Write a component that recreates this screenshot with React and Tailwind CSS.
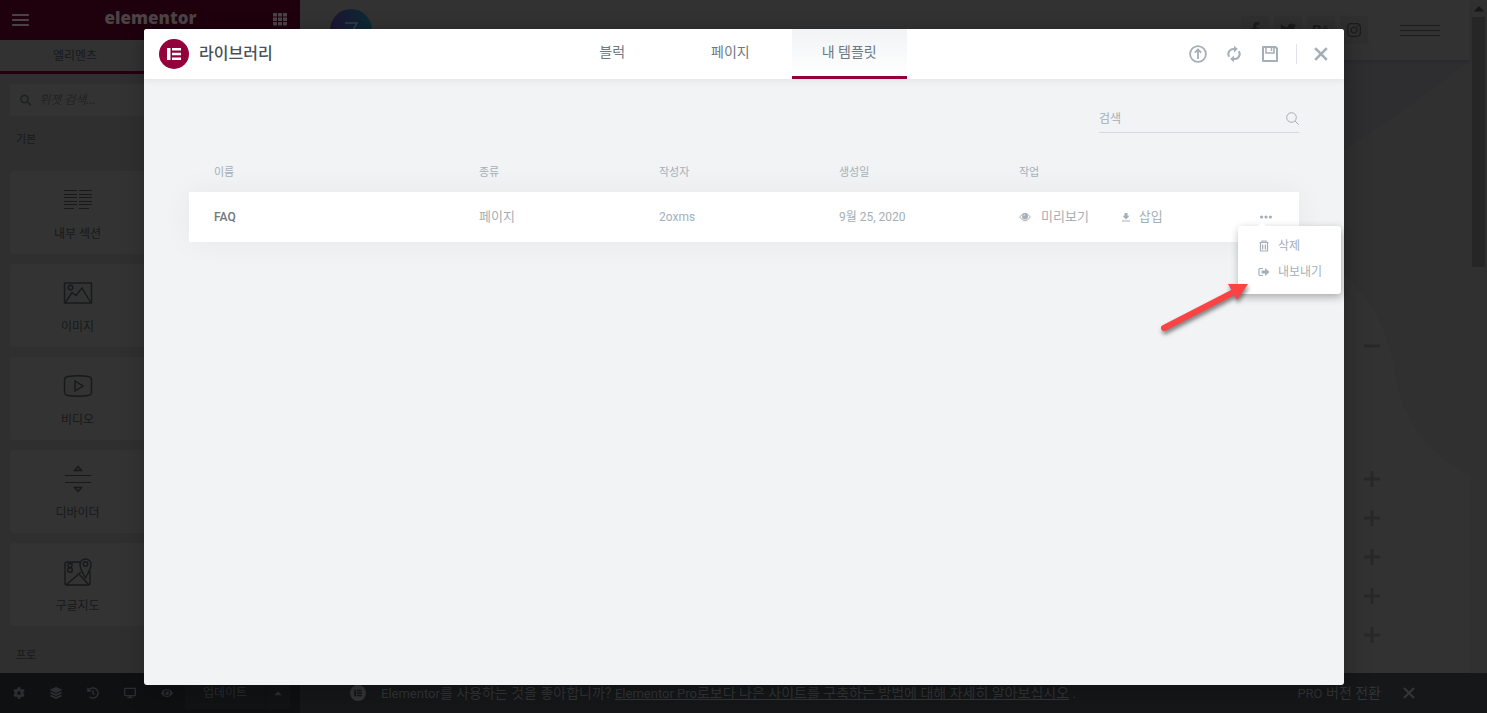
import React from 'react';
import { FaBehance, FaCaretUp, FaCog, FaDesktop, FaEye, FaFacebookF, FaHistory, FaInstagram, FaLayerGroup, FaSearch, FaTwitter } from 'react-icons/fa';

const line = { fill: 'none', stroke: 'currentColor', strokeWidth: 1.4 };

function ColumnsIcon() {
  return (
    <svg width="30" height="30" viewBox="0 0 30 30" {...line} strokeWidth="1">
      <path d="M1 5.500h13M1 9.500h13M1 12.500h13M1 16.500h13M1 19.500h13M1 23.500h10M16 5.500h13M16 9.500h13M16 12.500h13M16 16.500h13M16 19.500h13M16 23.500h10" />
    </svg>
  );
}

function ImageIcon() {
  return (
    <svg width="30" height="30" viewBox="0 0 30 30" {...line}>
      <rect x="1.500" y="5" width="27" height="20" />
      <circle cx="7.500" cy="9.500" r="2.300" />
      <path d="M2 25l7-10.500 4 3 6-7.500 9 15" />
    </svg>
  );
}

function VideoIcon() {
  return (
    <svg width="30" height="30" viewBox="0 0 30 30" {...line}>
      <path d="M5 5.500Q15 4 25 5.500Q28.500 6 28.500 9v12q0 3-3.500 3.500Q15 26 5 24.500Q1.500 24 1.500 21V9q0-3 3.500-3.500z" />
      <path d="M12 10v10l8-5z" />
    </svg>
  );
}

function DividerIcon() {
  return (
    <svg width="30" height="30" viewBox="0 0 30 30" {...line}>
      <path d="M2 11.500h26M2 18.500h26" strokeWidth="1" />
      <path d="M15 2.500l3.500 4h-7zM15 27.500l3.500-4h-7z" />
    </svg>
  );
}

function MapIcon() {
  return (
    <svg width="30" height="30" viewBox="0 0 30 30" {...line}>
      <path d="M17 5H4q-2 0-2 2v19q0 2 2 2h21q2 0 2-2V14" />
      <path d="M22.500 21C19 15 17 11 17 7.500a5.500 5.500 0 0 1 11 0C28 11 26 15 22.500 21z" />
      <circle cx="22.500" cy="7" r="2.300" />
      <path d="M3 28l15-13M16 17l10 11" />
      <circle cx="7" cy="8.500" r="2" />
      <circle cx="7" cy="13" r="2.300" />
      <path d="M8.500 7.500L10 6.500" strokeWidth="1" />
    </svg>
  );
}

function ElementorMark({ className }) {
  return (
    <svg className={className} viewBox="0 0 30 30">
      <circle cx="15" cy="15" r="15" className="fill-current" />
      <path className="fill-[var(--mark)]" d="M8 9h3.500v12H8zM13 9h9v2.500h-9zM13 13.700h9v2.600h-9zM13 18.500h9V21h-9z" />
    </svg>
  );
}

function UploadIcon() {
  return (
    <svg width="18" height="18" viewBox="0 0 18 18" fill="none" stroke="currentColor" strokeWidth="1.800">
      <circle cx="9" cy="9" r="7.900" />
      <path d="M9 14V5.500M5.800 7.600L9 4.600l3.200 3" />
    </svg>
  );
}

function SyncIcon() {
  return (
    <svg width="18" height="18" viewBox="0 0 18 18" fill="none" stroke="currentColor" strokeWidth="2">
      <path d="M9.500 4.200A4.900 4.900 0 0 0 4.200 11.700M8.500 13.800A4.900 4.900 0 0 0 13.800 6.300" />
      <path d="M9 .8v6.600l3.800-3.300zM9 10.600v6.600l-3.800-3.300z" fill="currentColor" stroke="none" />
    </svg>
  );
}

function SaveIcon() {
  return (
    <svg width="18" height="18" viewBox="0 0 18 18" fill="none" stroke="currentColor" strokeWidth="2">
      <path d="M2 2h12.500L16 3.500V16H2z" strokeLinejoin="round" />
      <path d="M5 2v6h8V2M10.500 2.500v3.500" strokeWidth="1.500" />
    </svg>
  );
}

function CloseIcon() {
  return (
    <svg width="14" height="14" viewBox="0 0 14 14" fill="none" stroke="currentColor" strokeWidth="2.600">
      <path d="M1.200 1.200l11.600 11.600M12.800 1.200L1.200 12.800" />
    </svg>
  );
}

function PreviewIcon() {
  return (
    <svg width="12" height="12" viewBox="0 0 12 12">
      <path d="M.6 6Q6-1.500 11.400 6Q6 13.500.6 6z" fill="none" stroke="currentColor" />
      <circle cx="6" cy="5.500" r="3" fill="currentColor" />
      <path d="M4.500 5.200Q4.700 4 6 3.800" fill="none" stroke="white" strokeWidth=".7" />
    </svg>
  );
}

function InsertIcon() {
  return (
    <svg width="10" height="10" viewBox="0 0 10 10" fill="currentColor">
      <path d="M3.500 1h3v2.700h2L5 7.400 1.500 3.700h2zM1 8.500h8v1H1z" />
    </svg>
  );
}

function TrashIcon() {
  return (
    <svg width="12" height="12" viewBox="0 0 12 12" fill="none" stroke="currentColor" strokeWidth="1.200">
      <path d="M1.500 2.500h9M4 2.500V1h4v1.500M2.500 2.500v8.500h7V2.500M4.700 4.500v5M7.300 4.500v5" />
    </svg>
  );
}

function ExportIcon() {
  return (
    <svg width="12" height="12" viewBox="0 0 12 12">
      <path d="M5 2.500H2Q1 2.500 1 3.500v5q0 1 1 1h3" fill="none" stroke="currentColor" strokeWidth="1.200" />
      <path d="M3.500 4.500H7V2l4.500 4L7 10V7.500H3.500z" fill="currentColor" />
    </svg>
  );
}

const widgets = [
  { label: '내부 섹션', Icon: ColumnsIcon },
  { label: '이미지', Icon: ImageIcon },
  { label: '비디오', Icon: VideoIcon },
  { label: '디바이더', Icon: DividerIcon },
  { label: '구글지도', Icon: MapIcon },
];

const tools = [
  { label: '설정', Icon: FaCog },
  { label: '내비게이터', Icon: FaLayerGroup },
  { label: '기록', Icon: FaHistory },
  { label: '반응형 모드', Icon: FaDesktop },
  { label: '미리보기', Icon: FaEye },
];

const socials = [
  { label: 'Facebook', Icon: FaFacebookF },
  { label: 'Twitter', Icon: FaTwitter },
  { label: 'Behance', Icon: FaBehance },
  { label: 'Instagram', Icon: FaInstagram },
];

function WidgetPanel() {
  return (
    <aside className="flex w-[300px] shrink-0 flex-col bg-[#2f2f2f] text-[#17191b]">
      <header className="flex h-10 shrink-0 items-center justify-between bg-[#1f000d] px-3 text-[#4a4346]">
        <button aria-label="메뉴">
          <svg width="17" height="16" viewBox="0 0 17 16" stroke="currentColor" strokeWidth="2.200" strokeLinecap="round"><path d="M1 3h15M1 8h15M1 13h15" /></svg>
        </button>
        <span className="pb-1 font-['Open_Sans',sans-serif] text-[17px] leading-5 font-extrabold">elementor</span>
        <button aria-label="위젯">
          <svg width="16" height="16" viewBox="0 0 16 16" fill="currentColor">
            <path d="M1 1h4v3.500H1zM6 1h4v3.500H6zM11 1h4v3.500h-4zM1 5.500h4V9H1zM6 5.500h4V9H6zM11 5.500h4V9h-4zM1 10h4v3.500H1zM6 10h4v3.500H6zM11 10h4v3.500h-4z" />
          </svg>
        </button>
      </header>
      <nav className="flex h-[34px] shrink-0 bg-[#323232]">
        <button className="w-1/2 border-b-3 border-[#250010] text-xs">엘리멘츠</button>
      </nav>
      <div className="flex flex-1 flex-col px-2.5 pt-2.5">
        <label className="flex h-8 items-center gap-2 rounded-[3px] bg-[#333] px-2.5 text-[#202224]">
          <FaSearch className="h-3 w-3" />
          <input aria-label="위젯 검색" placeholder="위젯 검색..." className="w-full bg-transparent text-xs italic outline-none placeholder:text-[#202224]" />
        </label>
        <h2 className="mt-4 px-1.5 text-[11px] leading-4">기본</h2>
        <div className="mt-[23px] grid grid-cols-2 gap-2.5">
          {widgets.map(({ label, Icon }) => (
            <button key={label} className="col-start-1 flex h-[83px] flex-col items-center justify-center gap-[11px] rounded-[3px] bg-[#333] pt-0.5 text-xs">
              <Icon />
              {label}
            </button>
          ))}
        </div>
        <h2 className="mt-[22px] px-1.5 text-[11px] leading-4">프로</h2>
      </div>
    </aside>
  );
}

function Preview() {
  return (
    <main className="relative flex min-w-0 flex-1 flex-col bg-[#303030]">
      <svg className="absolute top-0 right-0" width="126" height="673" viewBox="0 0 126 673">
        <path d="M0 60h126Q60 112 0 150z" fill="#2e2e30" />
        <path d="M0 276Q42 310 52 376Q64 446 126 474v199H0z" fill="#323232" />
      </svg>
      <header className="relative flex h-[60px] items-center justify-between bg-[#323232] px-[30px] shadow-sm">
        <svg width="42" height="42" viewBox="0 0 42 42">
          <defs>
            <linearGradient id="brand" x1="0" y1="0" x2="1" y2="0">
              <stop offset="0" stopColor="#1d1434" />
              <stop offset="1" stopColor="#0b2b33" />
            </linearGradient>
          </defs>
          <circle cx="21" cy="21" r="21" fill="url(#brand)" />
          <path d="M15 14h12L18 30" fill="none" stroke="#35404a" strokeWidth="1.500" />
        </svg>
        <div className="flex items-center gap-8">
          <div className="flex gap-[5px]">
            {socials.map(({ label, Icon }) => (
              <a key={label} href="#" aria-label={label} className="flex size-7 items-center justify-center bg-[#2f2f2f] text-[#1c1c1c]"><Icon className="size-4" /></a>
            ))}
          </div>
          <button aria-label="사이트 메뉴" className="flex w-10 flex-col gap-1">
            <span className="h-px bg-[#1c1c1c]" />
            <span className="h-px bg-[#1c1c1c]" />
            <span className="h-px bg-[#1c1c1c]" />
          </button>
        </div>
      </header>
      <div className="relative flex flex-col items-end gap-[23px] pt-[278px] pr-[90px] text-[#282828]">
        <button aria-label="접기" className="mb-[94px]">
          <svg width="16" height="16" viewBox="0 0 16 16" fill="currentColor"><path d="M0 6.500h16v3H0z" /></svg>
        </button>
        {[1, 2, 3, 4, 5].map((n) => (
          <button key={n} aria-label={`질문 ${n} 펼치기`}>
            <svg width="16" height="16" viewBox="0 0 16 16" fill="currentColor"><path d="M0 6.500h6.500V0h3v6.500H16v3H9.500V16h-3V9.500H0z" /></svg>
          </button>
        ))}
      </div>
    </main>
  );
}

function BottomBar() {
  return (
    <footer className="flex h-10 shrink-0 bg-[#151719] text-[#333537]">
      <div className="flex w-[300px] shrink-0 items-center bg-[#0f1012] text-[#2b2d30]">
        {tools.map(({ label, Icon }) => (
          <button key={label} aria-label={label} className="flex w-[37px] justify-center"><Icon className="size-3" /></button>
        ))}
        <div className="flex h-8 gap-px">
          <button className="w-20 bg-[#121315] text-xs">업데이트</button>
          <button aria-label="저장 옵션" className="flex w-6 items-center justify-center bg-[#121315]"><FaCaretUp className="size-3" /></button>
        </div>
      </div>
      <div className="flex flex-1 items-center pr-[72px] pl-[50px] text-sm">
        <span className="[--mark:#151719]"><ElementorMark className="size-4" /></span>
        <p className="ml-[15px]">
          <span className="text-[13px]">Elementor</span>를 사용하는 것을 좋아합니까?{' '}
          <a href="#" className="underline"><span className="text-[13px]">Elementor Pro</span>로보다 나은 사이트를 구축하는 방법에 대해 자세히 알아보십시오</a> .
        </p>
        <a href="#" className="ml-auto"><span className="text-[13px]">PRO</span> 버전 전환</a>
        <button aria-label="알림 닫기" className="ml-[22px]"><svg width="12" height="12" viewBox="0 0 12 12" stroke="currentColor" strokeWidth="2.200"><path d="M1 1l10 10M11 1L1 11" /></svg></button>
      </div>
    </footer>
  );
}

function Library() {
  return (
    <section role="dialog" aria-label="라이브러리" className="relative flex min-w-0 flex-1 flex-col rounded-[3px] bg-[#f1f3f5] text-[#a4afb7] shadow-[2px_8px_23px_3px_rgba(0,0,0,0.2)]">
      <header className="relative grid h-[50px] shrink-0 grid-cols-[1fr_auto_1fr] rounded-t-[3px] bg-white shadow-[0_0_8px_rgba(0,0,0,0.1)]">
        <div className="flex items-center gap-2.5 pl-[15px] text-[#93003c] [--mark:#fff]">
          <ElementorMark className="size-[30px]" />
          <h1 className="text-base font-medium text-[#495157]">라이브러리</h1>
        </div>
        <nav className="mr-6 flex text-sm text-[#6d7882]">
          <button className="border-b-3 border-transparent px-[42px] pb-0.5">블럭</button>
          <button className="border-b-3 border-transparent pr-[42px] pl-11 pb-0.5">페이지</button>
          <button aria-current="page" className="border-b-3 border-[#93003c] bg-linear-to-b from-[#f1f3f5] to-white px-[30px] pb-0.5">내 템플릿</button>
        </nav>
        <div className="flex items-center justify-end pr-4">
          <div className="flex gap-[18px] pr-[17px]">
            <button aria-label="가져오기"><UploadIcon /></button>
            <button aria-label="동기화"><SyncIcon /></button>
            <button aria-label="저장"><SaveIcon /></button>
          </div>
          <span className="h-5 w-px bg-[#e0e4e8]" />
          <button aria-label="닫기" className="ml-[17px]"><CloseIcon /></button>
        </div>
      </header>
      <div className="flex flex-1 flex-col px-[45px] pt-6">
        <label className="flex h-[30px] w-[200px] items-center self-end border-b border-[#d5dadf] pt-0.5">
          <input aria-label="검색" placeholder="검색" className="min-w-0 flex-1 bg-transparent text-xs outline-none placeholder:text-[#a4afb7]" />
          <svg width="13" height="13" viewBox="0 0 13 13" fill="none" stroke="currentColor"><circle cx="5.500" cy="5.500" r="4.800" /><path d="M9 9l3.600 3.600" /></svg>
        </label>
        <table className="mt-5 w-full table-fixed text-left text-[13px]">
          <colgroup>
            <col className="w-[290px]" />
            <col className="w-[180px]" />
            <col className="w-[180px]" />
            <col className="w-[180px]" />
            <col />
          </colgroup>
          <thead>
            <tr className="h-[39px] text-[11px] *:pt-0.5 *:font-normal">
              <th className="pl-[25px]">이름</th>
              <th>종류</th>
              <th>작성자</th>
              <th>생성일</th>
              <th>작업</th>
            </tr>
          </thead>
          <tbody>
            <tr className="h-[50px] bg-white shadow-[0_0_30px_rgba(0,0,0,0.05)]">
              <td className="pl-[25px] text-xs font-medium text-[#6d7882]">FAQ</td>
              <td>페이지</td>
              <td className="text-xs">2oxms</td>
              <td className="text-xs">9월 25, 2020</td>
              <td>
                <div className="flex items-center pr-[27px]">
                  <button className="flex items-center gap-2.5"><PreviewIcon />미리보기</button>
                  <button className="ml-8 flex items-center gap-2"><InsertIcon />삽입</button>
                  <div className="relative ml-auto flex">
                    <button aria-label="더 보기" aria-expanded="true">
                      <svg width="12" height="12" viewBox="0 0 12 12" fill="currentColor"><circle cx="1.600" cy="6" r="1.600" /><circle cx="6" cy="6" r="1.600" /><circle cx="10.400" cy="6" r="1.600" /></svg>
                    </button>
                    <div className="absolute top-[15px] left-[-22px] flex w-[103px] flex-col gap-2 rounded-[3px] bg-white py-[11px] pl-5 text-xs shadow-[1px_3px_8px_rgba(0,0,0,0.3)]">
                      <span className="absolute -top-1 left-5 border-x-4 border-b-4 border-x-transparent border-b-white" />
                      <button className="flex h-[18px] items-center gap-2"><TrashIcon />삭제</button>
                      <button className="mb-0.5 flex h-[18px] items-center gap-2"><ExportIcon />내보내기</button>
                    </div>
                    <svg className="pointer-events-none absolute top-[67px] left-[-104px] overflow-visible drop-shadow-[1px_3px_2px_rgba(0,0,0,0.5)]" width="96" height="52" viewBox="0 0 96 52">
                      <path d="M8 50L77 14.500" stroke="#fb4343" strokeWidth="6" strokeLinecap="round" />
                      <path d="M72 6h20L81 22z" fill="#fb4343" />
                    </svg>
                  </div>
                </div>
              </td>
            </tr>
          </tbody>
        </table>
      </div>
    </section>
  );
}

export default function App() {
  return (
    <div className="relative flex min-h-screen flex-col bg-[#303030] font-['Roboto','Noto_Sans_CJK_KR',sans-serif]">
      <div className="flex flex-1">
        <WidgetPanel />
        <Preview />
        <div className="flex w-[17px] shrink-0 flex-col items-center bg-[#303030]">
          <FaCaretUp className="h-[17px] w-2.5 shrink-0 text-[#171717]" />
          <div className="h-[250px] w-[13px] bg-[#262626]" />
        </div>
      </div>
      <BottomBar />
      <div className="absolute inset-0 flex pt-[29px] pr-[143px] pb-7 pl-36">
        <Library />
      </div>
    </div>
  );
}
